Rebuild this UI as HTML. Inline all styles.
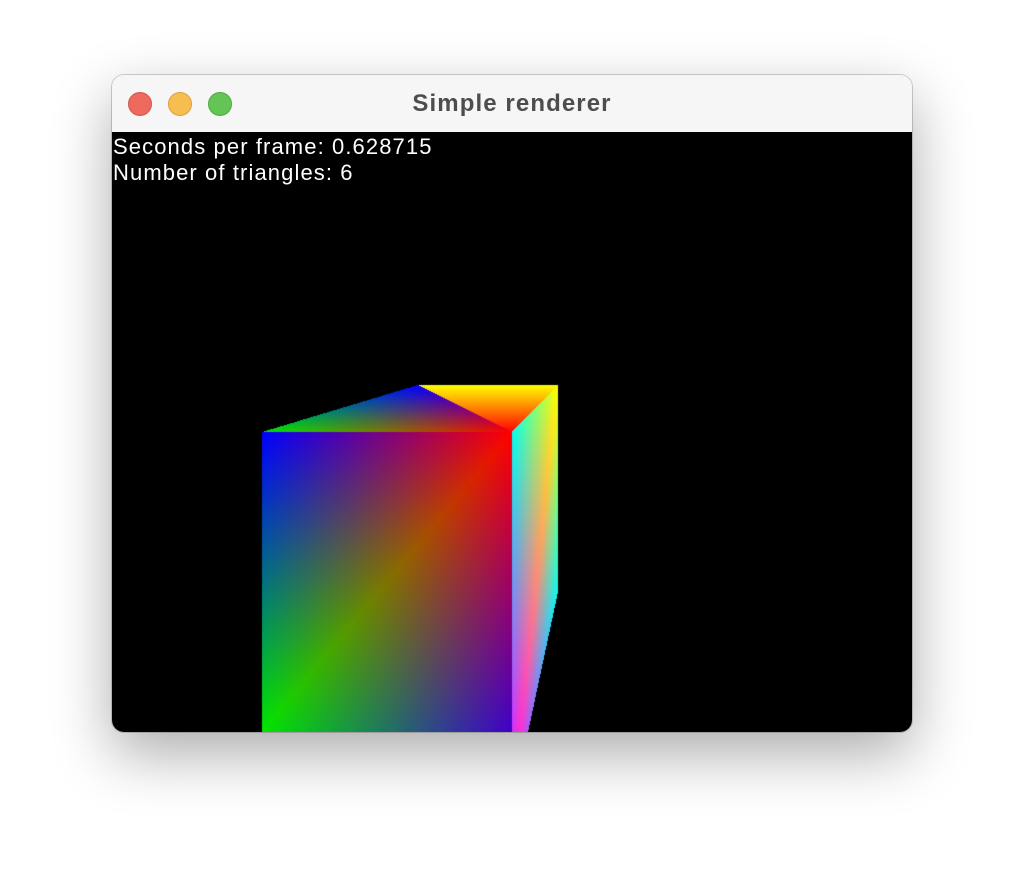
<!DOCTYPE html>
<html><head><style>
html,body{margin:0;padding:0;background:#fff;width:1024px;height:880px;overflow:hidden}
.win{position:absolute;left:112px;top:75px;width:800px;height:657px;border-radius:12px;overflow:hidden;box-shadow:0 22px 60px rgba(0,0,0,0.33),0 0 0 1px rgba(0,0,0,0.18)}
.tb{position:absolute;left:0;top:0;width:800px;height:57px;background:#f6f6f6}
.dot{position:absolute;top:17px;width:24px;height:24px;border-radius:50%}
.title{position:absolute;left:0;width:800px;top:15px;text-align:center;font:bold 24px "Liberation Sans",sans-serif;letter-spacing:1.1px;color:#4d4d4d}
canvas{position:absolute;left:0;top:57px}
.txt{position:absolute;left:1px;top:59px;color:#fff;font:22px/26px "Liberation Sans",sans-serif;letter-spacing:1.1px}
</style></head><body>
<div class="win">
<div class="tb">
<div class="dot" style="left:16px;background:#ee6a5f;border:0.5px solid #d0554b;box-sizing:border-box"></div>
<div class="dot" style="left:56px;background:#f6be50;border:0.5px solid #d9a03e;box-sizing:border-box"></div>
<div class="dot" style="left:96px;background:#62c554;border:0.5px solid #4fa843;box-sizing:border-box"></div>
<div class="title">Simple renderer</div>
</div>
<canvas id="c" width="800" height="600" style="background:#000"></canvas>
<div class="txt">Seconds per frame: 0.628715<br>Number of triangles: 6</div>
</div>
<script>
var c=document.getElementById('c'),g=c.getContext('2d');
var im=g.createImageData(800,600),d=im.data;
for(var i=0;i<d.length;i+=4){d[i+3]=255;}
function tri(a,b,cc){
 var ox=112,oy=132;
 var ax=a[0]-ox,ay=a[1]-oy,bx=b[0]-ox,by=b[1]-oy,cx=cc[0]-ox,cy=cc[1]-oy;
 var den=(by-cy)*(ax-cx)+(cx-bx)*(ay-cy);
 var x0=Math.max(0,Math.floor(Math.min(ax,bx,cx))),x1=Math.min(799,Math.ceil(Math.max(ax,bx,cx)));
 var y0=Math.max(0,Math.floor(Math.min(ay,by,cy))),y1=Math.min(599,Math.ceil(Math.max(ay,by,cy)));
 for(var y=y0;y<=y1;y++)for(var x=x0;x<=x1;x++){
  var px=x+0.5,py=y+0.5;
  var w1=((by-cy)*(px-cx)+(cx-bx)*(py-cy))/den;
  var w2=((cy-ay)*(px-cx)+(ax-cx)*(py-cy))/den;
  var w3=1-w1-w2;
  if(w1<0||w2<0||w3<0)continue;
  var k=(y*800+x)*4;
  for(var j=0;j<3;j++)d[k+j]=w1*a[2][j]+w2*b[2][j]+w3*cc[2][j];
 }
}
var B=[0,0,255],R=[255,0,0],G=[0,230,0],Y=[255,255,0],C=[0,255,240],M=[255,0,255],P=[64,0,200];
tri([262,432,B],[512,432,R],[262,732,G]);
tri([512,432,R],[512,732,P],[262,732,G]);
tri([262,432,G],[418,385,B],[512,432,R]);
tri([418,385,Y],[558,385,Y],[512,432,R]);
tri([512,432,C],[558,385,Y],[512,807,M]);
tri([558,385,Y],[558,592,C],[512,807,M]);
g.putImageData(im,0,0);
</script>
</body></html>
